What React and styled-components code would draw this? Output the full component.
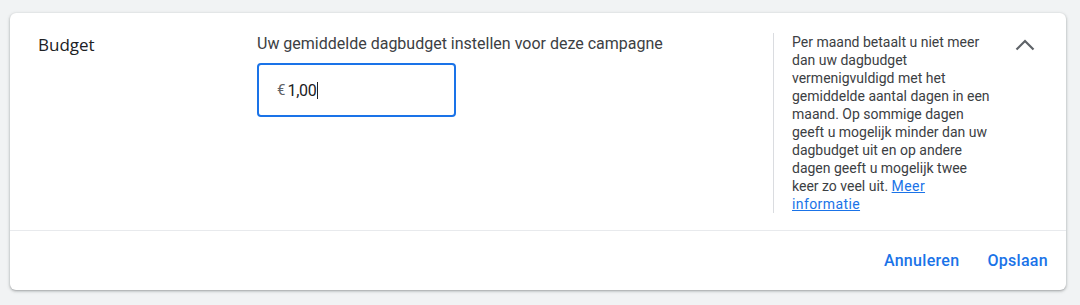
import React from 'react';
import styled, { createGlobalStyle } from 'styled-components';

const GlobalStyle = createGlobalStyle`
  body {
    margin: 0;
    background: #f1f3f4;
    font-family: Roboto, "Liberation Sans", Arial, sans-serif;
  }
`;

const Page = styled.div`
  width: 1080px;
  height: 305px;
  padding: 13px 14px 0 10px;
  box-sizing: border-box;
`;

const Card = styled.div`
  background: #fff;
  border-radius: 6px;
  box-shadow: 0 1px 2px rgba(60, 64, 67, 0.3), 0 1px 3px 1px rgba(60, 64, 67, 0.15);
  height: 277px;
  display: flex;
  flex-direction: column;
`;

const Body = styled.div`
  display: grid;
  grid-template-columns: 219px 516px 1fr;
  padding: 20px 29px 18px 28px;
  height: 218px;
  box-sizing: border-box;
  border-bottom: 1px solid #e8eaed;
`;

const Title = styled.div`
  font-family: "Open Sans", Roboto, sans-serif;
  font-size: 17px;
  line-height: 24px;
  color: #202124;
`;

const Field = styled.div`
  display: flex;
  flex-direction: column;
  align-items: flex-start;
`;

const FieldLabel = styled.div`
  font-size: 16px;
  line-height: 22px;
  color: #3c4043;
`;

const InputBox = styled.div`
  margin-top: 8px;
  width: 199px;
  height: 54px;
  box-sizing: border-box;
  border: 2px solid #1a73e8;
  border-radius: 4px;
  display: flex;
  align-items: center;
  padding-left: 18px;
`;

const Currency = styled.span`
  font-size: 15px;
  color: #5f6368;
  margin-right: 2px;
`;

const Value = styled.span`
  font-size: 16px;
  color: #202124;
  letter-spacing: -0.3px;
`;

const Caret = styled.span`
  display: inline-block;
  width: 1px;
  height: 17px;
  background: #202124;
  margin-left: 1px;
`;

const Aside = styled.div`
  display: flex;
  justify-content: space-between;
  align-items: flex-start;
  border-left: 1px solid #dadce0;
  padding-left: 18px;
`;

const HelpText = styled.p`
  margin: 0;
  width: 203px;
  font-size: 14px;
  line-height: 18px;
  color: #3c4043;
`;

const Link = styled.a`
  color: #1a73e8;
  text-decoration: underline;
  letter-spacing: 0.4px;
`;

const Toggle = styled.button`
  border: none;
  background: none;
  padding: 0;
  width: 28px;
  height: 28px;
  margin-top: -2px;
  margin-right: -2px;
  display: flex;
  align-items: center;
  justify-content: center;
  cursor: pointer;
`;

const Footer = styled.div`
  flex: 1;
  display: flex;
  justify-content: flex-end;
  align-items: center;
  gap: 12px;
  padding-right: 10px;
`;

const TextButton = styled.button`
  border: none;
  background: none;
  font-family: Roboto, sans-serif;
  font-size: 16px;
  font-weight: 500;
  color: #1a73e8;
  padding: 8px;
  letter-spacing: 0.3px;
  cursor: pointer;
`;

export default function App() {
  return (
    <Page>
      <GlobalStyle />
      <Card>
        <Body>
          <Title>Budget</Title>
          <Field>
            <FieldLabel>Uw gemiddelde dagbudget instellen voor deze campagne</FieldLabel>
            <InputBox>
              <Currency>€</Currency>
              <Value>1,00</Value>
              <Caret />
            </InputBox>
          </Field>
          <Aside>
            <HelpText>
              Per maand betaalt u niet meer dan uw dagbudget vermenigvuldigd met het gemiddelde
              aantal dagen in een maand. Op sommige dagen geeft u mogelijk minder dan uw dagbudget
              uit en op andere dagen geeft u mogelijk twee keer zo veel uit. <Link href="#">Meer informatie</Link>
            </HelpText>
            <Toggle aria-label="Inklappen">
              <svg width="20" height="12" viewBox="0 0 20 12">
                <path d="M1.5 10.5L10 2l8.5 8.5" fill="none" stroke="#5f6368" strokeWidth="2.2" />
              </svg>
            </Toggle>
          </Aside>
        </Body>
        <Footer>
          <TextButton>Annuleren</TextButton>
          <TextButton>Opslaan</TextButton>
        </Footer>
      </Card>
    </Page>
  );
}
